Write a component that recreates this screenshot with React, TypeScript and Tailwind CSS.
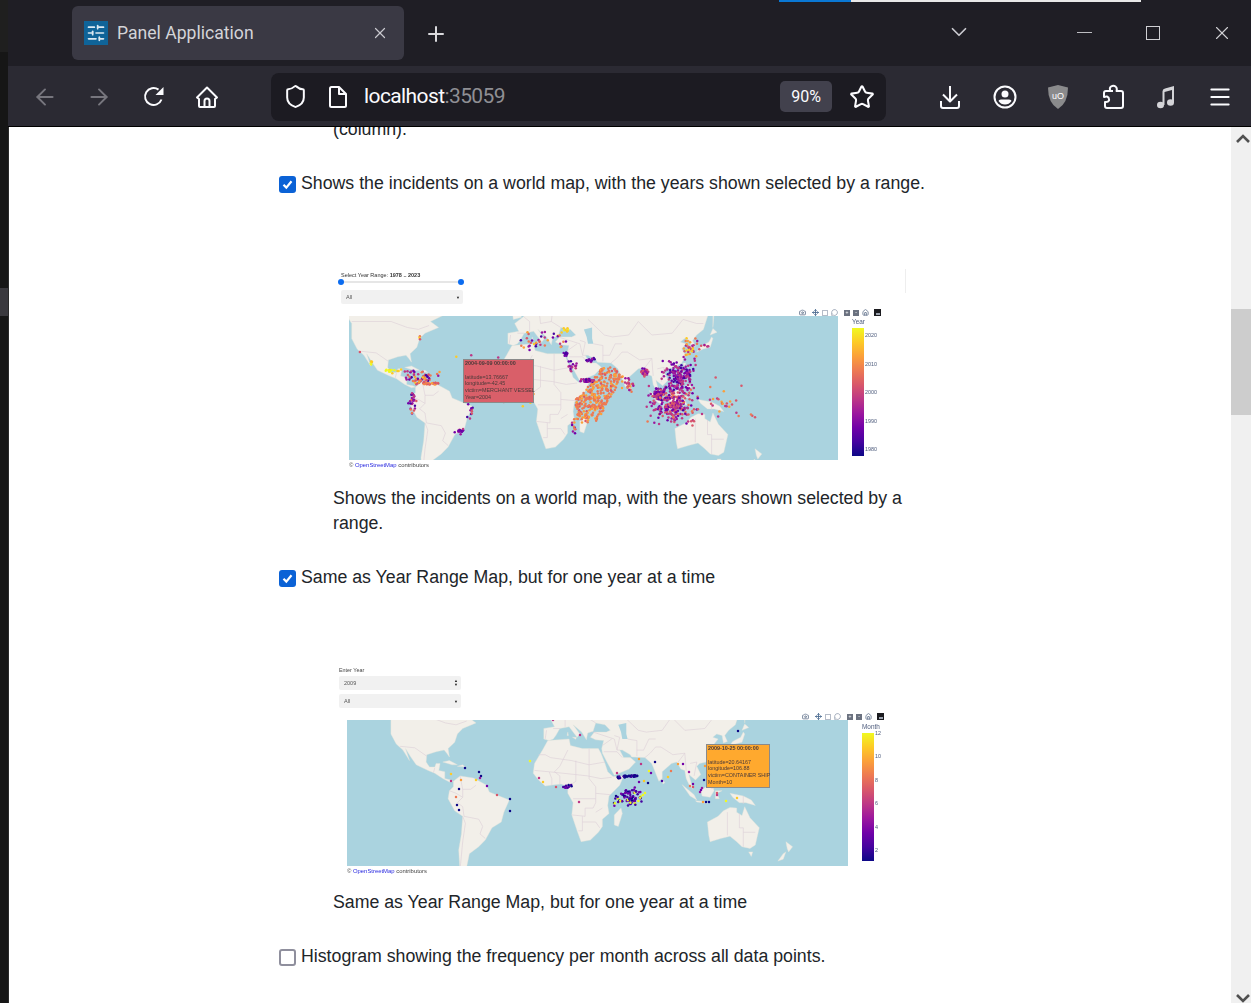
import React from "react";
import {
  ArrowLeft,
  ArrowRight,
  Camera,
  ChevronDown,
  Home,
  Menu,
  MessageCircle,
  Move,
  Plus,
  Shield,
  SlidersHorizontal,
  Star,
  X,
} from "lucide-react";

type Pt = [number, number];
type Proj = { k: number; lon0: number; y0: number };
type Dot = { x: number; y: number; t: number };

const LAND: Pt[][] = [
  [[-168,66],[-140,70],[-125,70],[-95,72],[-82,68],[-94,60],[-82,52],[-79,55],[-65,60],[-56,52],[-66,49],[-60,46],[-70,43],[-74,40],[-76,35],[-81,31],[-80,25.5],[-82,28],[-84,30],[-90,29],[-97,27],[-97.5,22],[-95,18.5],[-91,18.5],[-90,21],[-87,21],[-88,16],[-83.5,15],[-83.5,10],[-79,9],[-77,8],[-80,7.5],[-85,10],[-91,14],[-96,16],[-105,20],[-109,25.5],[-113,31],[-110,23],[-115,30],[-120,34],[-124,40],[-124,48],[-130,54],[-150,60],[-165,55]],
  [[-77,8],[-72,12],[-62,10.5],[-52,5],[-50,0],[-44,-2.5],[-35,-6],[-39,-15],[-41,-22],[-48,-26],[-53,-34],[-58,-38],[-65,-42],[-68,-52],[-72,-52],[-73,-40],[-71,-30],[-70,-18],[-76,-14],[-81,-5],[-80,1],[-77,4]],
  [[-6,36],[10,37],[11,33],[20,31],[32,31],[34,28],[37,21],[39,15],[43,11.5],[51,12],[48,5],[40,-3],[39,-10],[40,-16],[35,-20],[35,-25],[32,-29],[26,-34],[19,-35],[16,-28],[12,-17],[13,-8],[9,-1],[9,4],[4,6],[-4,5],[-8,4.5],[-13,9],[-17,14],[-16,21],[-10,30]],
  [[-9,37],[-9,43],[-1,44],[-4,48],[2,51],[8,54],[9,57],[12,54],[20,55],[24,59],[30,60],[22,60],[22,65],[17,61],[17,57],[12,56],[6,58],[12,66],[25,71],[40,67],[60,69],[80,73],[110,76],[140,73],[170,70],[180,68],[180,62],[163,60],[156,52],[156,58],[140,55],[135,45],[130,42],[127,39],[129,35.5],[126,34.5],[125,39],[121,40],[118,38],[122,37],[119,34],[122,30],[119,25],[113,22],[108,21],[106,19],[109,13],[105,9],[100,13],[103,2],[100,6],[98,10],[97,16],[94,17],[91,22],[87,21],[80,15],[80,10],[77.5,8],[73,19],[72,21],[67,25],[57,25.5],[56,27],[50,30],[48,30],[51,25],[56,25],[60,22],[55,17],[44,12.5],[39,21],[35,28],[34.5,31],[36,36],[30,36.5],[26,38],[29,41],[38,41],[41,42],[37,45],[30,46],[28,41.5],[24,40.5],[23,36.5],[19.5,41],[13,45],[18,40],[16,38],[10,44],[3,43],[0,39],[-2,37],[-5,36]],
  [[-5,50],[1,51],[-2,56],[-5,58],[-6,55]],
  [[-10,52],[-6,52],[-6,55],[-9,54]],
  [[-85,22],[-80,23],[-74,20],[-78,20]],
  [[-74,19],[-68,18.5],[-70,20]],
  [[49,-12],[50,-16],[47,-25],[44,-24],[44,-17]],
  [[80,9.5],[82,7],[80.5,6]],
  [[95,5.5],[104,-2],[106,-6],[101,-3]],
  [[105,-6.5],[114,-7.5],[114,-8.5],[106,-7.5]],
  [[109,1],[117,7],[119,1],[116,-4],[110,-3]],
  [[120,1],[125,1],[121,-1],[123,-5],[120,-5]],
  [[131,-1],[141,-3],[147,-6],[150,-10],[143,-8],[138,-8],[133,-4]],
  [[120,18],[122,18],[122,14],[120,14]],
  [[122,9],[126,9],[126,6],[123,7]],
  [[120,25],[122,25],[121,22]],
  [[130,32],[135,34],[140,35],[142,40],[141,41],[139,38],[133,35.5]],
  [[140,42],[145,43.5],[142,45.5]],
  [[142,46],[143,54],[142,54]],
  [[114,-22],[122,-18],[126,-14],[131,-11.5],[136,-12],[136,-15],[140,-17.5],[142,-11],[146,-19],[153,-26],[150,-37],[146,-39],[140,-38],[136,-35],[131,-31.5],[124,-33],[116,-35],[115,-31]],
  [[145,-41],[148,-41],[147,-43.5]],
  [[173,-35],[178,-38],[175,-41],[174,-39]],
  [[173,-41],[171,-45],[167,-46],[171,-42]],
  [[9,41],[9.5,39],[8.5,39]],
  [[12.5,38],[15.5,38],[15,36.8]],
];

const CASPIAN: Pt[] = [[47,45],[53,46],[53,40],[54,37],[50,37],[49,41]];

const BORDERS: Pt[][] = [
  [[-124,49],[-95,49],[-83,46],[-75,45],[-67,47]],
  [[-117,32.5],[-106,31.5],[-97,26]],
  [[-92,14.5],[-91,18]],
  [[-72,12],[-70,2],[-70,-4],[-74,-8],[-70,-11],[-69,-18],[-58,-20],[-55,-25],[-57,-30],[-53,-33]],
  [[-60,5],[-64,2],[-70,2]],
  [[-70,-18],[-68,-23],[-70,-35],[-72,-50]],
  [[-80,1],[-75,-1],[-70,-4]],
  [[-13,27],[-8,27],[-4,25],[12,23],[25,20],[37,22]],
  [[25,31],[25,10],[30,4],[30,-8],[28,-12],[22,-12],[22,-18],[12,-17]],
  [[-16,16],[-5,15],[15,13],[24,12],[34,10],[42,11]],
  [[9,4],[15,8],[15,23]],
  [[3,6],[3,12],[-1,15],[3,19],[9,30]],
  [[13,-5],[30,-5]],
  [[30,-1],[41,-2]],
  [[20,-18],[20,-28],[17,-28]],
  [[20,-22],[30,-22],[33,-26]],
  [[35,-12],[30,-15]],
  [[-5,15],[-3,10],[-3,5]],
  [[-8,37],[-7,42]],
  [[-2,43],[3,43]],
  [[3,51],[7,49],[7,44]],
  [[14,54],[15,48],[23,49],[24,54],[28,56],[30,60]],
  [[23,49],[30,46]],
  [[28,41],[44,37],[46,30],[48,30]],
  [[35,33],[42,37]],
  [[36,29],[46,29],[50,25]],
  [[44,39],[48,38],[46,30]],
  [[61,26],[61,36],[54,37]],
  [[61,30],[66,30],[70,37],[75,37]],
  [[67,25],[71,28],[75,32],[79,32],[88,27],[97,28],[92,22]],
  [[50,50],[62,42],[68,41],[80,42],[87,49],[97,42],[112,43],[120,50],[130,48],[135,48]],
  [[97,28],[98,16]],
  [[101,21],[106,22],[104,12]],
  [[141,-3],[141,-9]],
  [[129,-15],[129,-31]],
  [[138,-16],[138,-26],[141,-26],[141,-38]],
  [[141,-29],[150,-29]],
];

const PLASMA = ["#0d0887","#46039f","#7201a8","#9c179e","#bd3786","#d8576b","#ed7953","#fb9f3a","#fdca26","#f0f921"];
const plasma = (t: number) => PLASMA[Math.min(9, Math.max(0, Math.round(t * 9)))];

let seed = 1234;
const rnd = () => {
  seed = (seed + 0x6d2b79f5) | 0;
  let r = Math.imul(seed ^ (seed >>> 15), 1 | seed);
  r = (r + Math.imul(r ^ (r >>> 7), 61 | r)) ^ r;
  return ((r ^ (r >>> 14)) >>> 0) / 4294967296;
};
const between = (a: number, b: number) => a + (b - a) * rnd();
// softer edges than a plain box
const soft = (a: number, b: number) => a + (b - a) * ((rnd() + rnd()) / 2);

const project = (p: Proj, lon: number, lat: number): Pt => [
  (lon - p.lon0) * p.k,
  p.y0 - p.k * (180 / Math.PI) * Math.log(Math.tan(Math.PI / 4 + (lat * Math.PI) / 360)),
];

const toPath = (p: Proj, pts: Pt[], close: boolean) =>
  pts
    .map(([lon, lat], i) => {
      const [x, y] = project(p, lon, lat);
      return `${i ? "L" : "M"}${x.toFixed(1)} ${y.toFixed(1)}`;
    })
    .join("") + (close ? "Z" : "");

// lon min, lon max, lat min, lat max, count, colour low, colour high
const CLUSTERS: number[][] = [
  [43,56,11.5,14,45,0.1,0.5],[34,42,15,28,14,0.1,0.5],[48,56,25,29,14,0.1,0.4],[32,36,29,33,10,0.05,0.3],
  [97,106,-1,7,45,0.1,0.6],[92,132,-20,12,260,0.15,0.65],[104,130,4,28,150,0.1,0.5],[118,133,24,43,34,0.3,0.9],
  [130,141,33,38,6,0.3,0.7],[130,166,-14,4,20,0.4,0.8],[88,95,15,22,24,0.2,0.6],[72,86,3,16,24,0.3,0.8],
  [-88,-58,10,20,55,0.1,0.9],[-78,-58,9.5,12,32,0.5,0.8],[-83,-76,-14,6,26,0.1,0.7],[-40,-34,-16,-3,10,0.1,0.7],[-49,-40,-26,-21,8,0.1,0.7],
  [-46,-42,-24.5,-23,12,0.05,0.3],[-2,13,-4,6,12,0.6,0.95],[-6,37,32,45,36,0.1,0.9],[-101,-87,17,22,14,0.85,1],
  [-111,-108,23,27,5,0.8,1],[29,38,43,46,8,0.9,1],[37,42,-27,-13,10,0.1,0.8],[-19,-12,9,31,7,0.2,0.9],[-75,-72,38,42,3,0.5,0.9],
];

const buildRangeDots = (p: Proj) => {
  seed = 77;
  const dots: Dot[] = [];
  let left = 320;
  while (left > 0) {
    const lat = between(-18, 22);
    const lon = between(41, 78);
    const min = lat < 0 ? 41 : 43 + lat * 0.8;
    const max = 76 - Math.abs(lat - 15) * 0.6;
    if (lon < min || lon > max) continue;
    const [x, y] = project(p, lon, lat);
    dots.push({ x, y, t: between(0.58, 0.78) });
    left--;
  }
  CLUSTERS.forEach(([a, b, c, d, n, lo, hi]) => {
    for (let i = 0; i < n; i++) {
      const [x, y] = project(p, soft(a, b), soft(c, d));
      dots.push({ x, y, t: between(lo, hi) });
    }
  });
  const extra: number[][] = [
    [173,-14,0.55],[171,-13,0.6],[163,9,0.5],[150,5,0.75],[144,15,0.6],[140,8,0.65],[170,-12,0.7],[146,-1,0.5],
    [-47,29,0.85],[-31,-2,0.5],[-36,30,0.4],[-118,32,0.6],[-12,-3,0.6],[2,-6,0.85],
  ];
  extra.forEach(([lon, lat, t]) => {
    const [x, y] = project(p, lon, lat);
    dots.push({ x, y, t });
  });
  return dots;
};

// traced from the one-year map: x, y (map pixels), colour
const YEAR_SPOTS: number[][] = [
  [206,0,0.4],[233,15,0.4],[118,48,0],[132,52,0.05],[134,56,0.05],[133,58,0.3],[104,54,0.85],[104,61,0.4],
  [114,60,0.8],[129,60,0.85],[112,69,0],[109,77,0.7],[110,85,0],[112,90,0],[140,66,0.2],[150,75,0.5],
  [163,79,0],[163,91,0],[183,41,1],[192,58,0.4],[196,62,0.85],[209,67,0.5],[232,82,0.4],[270,53,0.4],[269,76,0],[267,83,0],
  [391,11,0],[292,39,0.8],[308,42,0.05],[294,44,0.4],[331,44,0.75],[336,44,0.2],[358,46,0.8],[324,51,0.7],[342,52,0.3],
  [321,57,0.85],[302,51,0.95],[304,53,0.2],[315,61,0.1],[301,63,0.05],[292,62,0.2],[297,61,0.85],[357,60,0.05],
  [343,66,0.7],[346,67,0.6],[346,64,0.2],[353,72,0.3],[355,68,0.3],[354,70,0.2],[370,75,0.45],[370,73,0.5],[390,78,0.9],[379,81,0.95],
  [356,82,0.8],[359,82,0],[362,82,0],[365,67,0.6],[298,73,0.95],[296,75,0.95],
];

const buildYearDots = () => {
  seed = 31;
  const dots: Dot[] = YEAR_SPOTS.map(([x, y, t]) => ({ x, y, t }));
  for (let i = 0; i < 36; i++) {
    const x = between(270, 291);
    dots.push({ x, y: 57.5 - (x - 270) * 0.1 + between(-1, 1), t: between(0, 0.1) });
  }
  for (let i = 0; i < 12; i++) dots.push({ x: between(216, 228), y: between(65, 68), t: between(0, 0.2) });
  for (let i = 0; i < 70; i++) {
    const t = rnd();
    dots.push({ x: soft(266, 300), y: soft(67, 90), t: t > 0.78 ? 0.95 : t * 0.35 });
  }
  return dots;
};

const WorldMap = ({ proj, width, height, dots }: { proj: Proj; width: number; height: number; dots: Dot[] }) => (
  <svg width={width} height={height} viewBox={`0 0 ${width} ${height}`} className="block">
    <rect width={width} height={height} fill="#aad3df" />
    {LAND.map((pts, i) => (
      <path key={i} d={toPath(proj, pts, true)} fill="#f2efe9" stroke="#e4e3d8" strokeWidth="0.4" />
    ))}
    <path d={toPath(proj, CASPIAN, true)} fill="#aad3df" />
    {BORDERS.map((pts, i) => (
      <path key={i} d={toPath(proj, pts, false)} fill="none" stroke="#dccfd6" strokeWidth="0.6" />
    ))}
    {dots.map((d, i) => (
      <circle key={i} cx={d.x} cy={d.y} r="1.25" fill={plasma(d.t)} />
    ))}
  </svg>
);

const PlotTools = () => (
  <div className="flex items-center text-[#6b7b93]">
    <Camera size={7} strokeWidth={3} className="mr-[6px]" />
    <Move size={7} strokeWidth={3} className="mr-[3px] text-[#4a6a90]" />
    <span className="mr-[3px] h-[6px] w-[6px] border border-dashed border-[#b5bcc8]" />
    <MessageCircle size={7} strokeWidth={2} className="mr-[6px]" />
    <span className="mr-[3px] flex h-[6px] w-[6px] items-center justify-center bg-[#6b7280] text-[5px] leading-none text-white">+</span>
    <span className="mr-[3px] flex h-[6px] w-[6px] items-center justify-center bg-[#6b7280] text-[5px] leading-none text-white">-</span>
    <Home size={7} strokeWidth={3} className="mr-[5px]" />
    <span className="flex h-[7px] w-[7px] items-end justify-center bg-[#1b1b1f] pb-[1px]">
      <span className="h-[2px] w-[4px] bg-[#9ca3af]" />
    </span>
  </div>
);

const Attribution = () => (
  <p className="text-[5.9px] leading-[7px] text-[#444]">
    © <span className="text-[#2a2ae0]">OpenStreetMap</span> contributors
  </p>
);

const ColorBar = ({ title, ticks, barClass }: { title: string; ticks: [string, number][]; barClass: string }) => (
  <div className="relative text-[5.4px] text-[#4d5b7c]">
    <div className="h-[12px] text-[6.4px] leading-[12px]">{title}</div>
    <div className={`relative w-[12px] bg-[linear-gradient(to_top,#0d0887,#46039f,#7201a8,#9c179e,#bd3786,#d8576b,#ed7953,#fb9f3a,#fdca26,#f0f921)] ${barClass}`}>
      {ticks.map(([label, top]) => (
        <span key={label} className="absolute left-[13px] leading-none" style={{ top }}>
          {label}
        </span>
      ))}
    </div>
  </div>
);

const Tooltip = ({ className, heading, lines }: { className: string; heading: string; lines: string[] }) => (
  <div className={`absolute border border-[#8a8a8a] px-[1px] text-[5.4px] leading-[6.8px] text-[#4a3a3a] ${className}`}>
    <div className="font-bold">{heading}</div>
    <div className="h-[6.8px]" />
    {lines.map((l) => (
      <div key={l} className="whitespace-nowrap">{l}</div>
    ))}
  </div>
);

const SelectBox = ({ label, arrows }: { label: string; arrows?: boolean }) => (
  <div className="flex h-[14px] w-[122px] items-center justify-between rounded-[2px] bg-[#f1f1f1] pl-[5px] pr-[3px] text-[5.5px] text-[#555]">
    <span>{label}</span>
    {arrows ? (
      <span className="flex flex-col text-[4px] leading-[4px] text-[#222]">
        <span>▲</span>
        <span>▼</span>
      </span>
    ) : (
      <span className="text-[4px] text-[#222]">▼</span>
    )}
  </div>
);

const RANGE_PROJ: Proj = { k: 1.358, lon0: -126, y0: 82 };
const YEAR_PROJ: Proj = { k: 1.33, lon0: -157, y0: 72 };
const rangeDots = buildRangeDots(RANGE_PROJ);
const yearDots = buildYearDots();

const RangePanel = () => (
  <div className="relative mt-[73px] h-[206px] w-[573px] font-['Liberation_Sans',sans-serif] blur-[0.5px]">
    <div className="absolute right-0 top-0 h-[24px] w-px bg-[#eeeeee]" />
    <div className="pl-[8px] pt-[2px]">
      <div className="text-[5.5px] leading-[8px] text-[#333]">
        Select Year Range: <b>1978 .. 2023</b>
      </div>
      <div className="relative flex h-[6px] w-[120px] items-center justify-between">
        <span className="absolute inset-x-0 h-[1.5px] bg-[#e6e6e6]" />
        <span className="relative -ml-[3px] h-[6px] w-[6px] rounded-full bg-[#0b6cf0]" />
        <span className="relative -mr-[3px] h-[6px] w-[6px] rounded-full bg-[#0b6cf0]" />
      </div>
      <div className="mt-[5px]">
        <SelectBox label="All" />
      </div>
    </div>
    <div className="relative ml-[16px] mt-[12px] flex">
      <div className="relative">
        <WorldMap proj={RANGE_PROJ} width={489} height={144} dots={rangeDots} />
        <Tooltip
          className="left-[114px] top-[43px] h-[44px] w-[71px] bg-[#d95f69]"
          heading="2004-09-09 00:00:00"
          lines={["latitude=13.76667", "longitude=-42.45", "victim=MERCHANT VESSEL", "Year=2004"]}
        />
      </div>
      <div className="ml-[14px]">
        <ColorBar
          title="Year"
          barClass="h-[128px]"
          ticks={[["2020", 5], ["2010", 34], ["2000", 62], ["1990", 91], ["1980", 119]]}
        />
      </div>
      <div className="absolute left-[450px] -top-[7px]">
        <PlotTools />
      </div>
    </div>
    <div className="ml-[16px] mt-[2px]">
      <Attribution />
    </div>
  </div>
);

const YearPanel = () => (
  <div className="relative mt-[74px] h-[213px] w-[573px] font-['Liberation_Sans',sans-serif] blur-[0.5px]">
    <div className="pl-[6px] pt-[2px]">
      <div className="text-[5.4px] leading-[8px] text-[#444]">Enter Year</div>
      <div className="mt-[2px]">
        <SelectBox label="2009" arrows />
      </div>
      <div className="mt-[4px]">
        <SelectBox label="All" />
      </div>
    </div>
    <div className="relative ml-[14px] mt-[12px] flex">
      <div className="relative">
        <WorldMap proj={YEAR_PROJ} width={501} height={146} dots={yearDots} />
        <Tooltip
          className="left-[359px] top-[24px] h-[44px] w-[64px] bg-[#ffa92e]"
          heading="2009-10-25 00:00:00"
          lines={["latitude=20.64167", "longitude=106.88", "victim=CONTAINER SHIP", "Month=10"]}
        />
      </div>
      <div className="ml-[14px] mt-[1px]">
        <ColorBar
          title="Month"
          barClass="h-[128px]"
          ticks={[["12", -2], ["10", 21], ["8", 45], ["6", 68], ["4", 92], ["2", 115]]}
        />
      </div>
      <div className="absolute left-[455px] -top-[7px]">
        <PlotTools />
      </div>
    </div>
    <div className="ml-[14px] mt-[2px]">
      <Attribution />
    </div>
  </div>
);

const CheckRow = ({ checked, label, className }: { checked?: boolean; label: string; className: string }) => (
  <div className={`flex h-[25px] items-center ${className}`}>
    {checked ? (
      <span className="mr-[5px] mt-[2px] flex h-[17px] w-[17px] items-center justify-center rounded-[3px] bg-[#0b62d6]">
        <svg width="13" height="13" viewBox="0 0 13 13" fill="none" stroke="#fff" strokeWidth="2.2">
          <path d="M2.5 6.8 L5.3 9.6 L10.5 3.2" />
        </svg>
      </span>
    ) : (
      <span className="mr-[5px] mt-[2px] h-[17px] w-[17px] rounded-[3px] border-2 border-[#8f8f9d] bg-white" />
    )}
    <span>{label}</span>
  </div>
);

const Reload = () => (
  <svg width="24" height="24" viewBox="0 0 24 24" fill="none" stroke="#fbfbfe" strokeWidth="2">
    <path d="M19.5 14.5 A8.5 8.5 0 1 1 16.5 4.6" />
    <path d="M21.5 2 V10 H13.5 Z" fill="#fbfbfe" stroke="none" />
  </svg>
);

const FoxHome = () => (
  <svg width="24" height="24" viewBox="0 0 24 24" fill="none" stroke="#fbfbfe" strokeWidth="2" strokeLinejoin="round">
    <path d="M12 2.5 L2 12.5 L4 14 L4 21 Q4 22 5 22 L19 22 Q20 22 20 21 L20 14 L22 12.5 Z" />
    <path d="M9.5 22 V16 Q9.5 13.5 12 13.5 Q14.5 13.5 14.5 16 V22" />
  </svg>
);

const PageIcon = () => (
  <svg width="20" height="24" viewBox="0 0 20 24" fill="none" stroke="#fbfbfe" strokeWidth="2" strokeLinejoin="round">
    <path d="M2 3.5 Q2 2 3.5 2 H11 L18 9 V20.5 Q18 22 16.5 22 H3.5 Q2 22 2 20.5 Z" />
    <path d="M11 2 V9 H18" />
  </svg>
);

const DownloadIcon = () => (
  <svg width="24" height="26" viewBox="0 0 24 26" fill="none" stroke="#fbfbfe" strokeWidth="2" strokeLinejoin="round">
    <path d="M12 2 V17 M5 10.5 L12 17.5 L19 10.5" />
    <path d="M3 17 V22 Q3 24 5 24 H19 Q21 24 21 22 V17" />
  </svg>
);

const AccountIcon = () => (
  <svg width="24" height="24" viewBox="0 0 24 24" fill="none" stroke="#fbfbfe" strokeWidth="2">
    <circle cx="12" cy="12" r="10.5" />
    <circle cx="12" cy="9" r="3.5" fill="#fbfbfe" stroke="none" />
    <path d="M5.5 16 Q5.5 14.5 8 14.5 H16 Q18.5 14.5 18.5 16 Q16 19.5 12 19.5 Q8 19.5 5.5 16 Z" fill="#fbfbfe" stroke="none" />
  </svg>
);

const UBlockIcon = () => (
  <svg width="24" height="26" viewBox="0 0 24 26">
    <path d="M12 1 L22 3.5 Q22 19 12 25 Q2 19 2 3.5 Z" fill="#8a8a8c" />
    <text x="12" y="14.5" fontSize="9" fontFamily="'Liberation Sans', sans-serif" textAnchor="middle" fill="#fff">
      uO
    </text>
  </svg>
);

const PuzzleIcon = () => (
  <svg width="24" height="26" viewBox="0 0 24 26" fill="none" stroke="#fbfbfe" strokeWidth="2" strokeLinejoin="round">
    <path d="M12 7 H9.5 Q8 4 10 2.5 Q12.5 1 14.5 2.5 Q16.5 4 15.5 7 H20 Q22 7 22 9 V22 Q22 24 20 24 H6 Q4 24 4 22 V18 Q7 18.5 8 16.5 Q8.5 13.5 6 12.5 Q5 12.2 3 13 V9 Q3 7 5 7 H9.5" />
  </svg>
);

const MusicIcon = () => (
  <svg width="20" height="24" viewBox="0 0 20 24" fill="#d4d4d8">
    <ellipse cx="4.5" cy="20" rx="3.5" ry="3.3" />
    <ellipse cx="14.5" cy="17.5" rx="3.5" ry="3.3" />
    <path d="M6.5 20 V6.5 Q6.5 4 9 3.5 L18 1 V17.5 H16 V5 L8.5 7 V20 Z" />
  </svg>
);

const App = () => (
  <div className="flex h-[1003px] w-[1251px] flex-col overflow-hidden bg-white font-['Liberation_Sans',sans-serif]">
    <div className="flex h-[127px] shrink-0">
      <div className="flex w-[8px] shrink-0 flex-col">
        <div className="h-[52px] bg-[#1f1f1f]" />
        <div className="flex-1 bg-[#161616]" />
      </div>
      <div className="flex min-w-0 flex-1 flex-col">
        {/* tab strip */}
        <div className="relative flex h-[66px] shrink-0 items-start bg-[#1f1e25] pl-[64px] pt-[6px]">
          <div className="absolute left-[771px] top-0 flex h-[2px] w-[362px]">
            <div className="w-[72px] bg-[#0a78d4]" />
            <div className="flex-1 bg-[#e8e8e8]" />
          </div>
          <div className="flex h-[54px] w-[332px] items-center rounded-[6px] bg-[#3a3944] pl-[12px] pr-[15px]">
            <div className="mr-[9px] flex h-[24px] w-[24px] items-center justify-center bg-[#0f6499]">
              <SlidersHorizontal size={20} color="#dbe9f2" strokeWidth={2} />
            </div>
            <span className="flex-1 font-['Roboto',sans-serif] text-[17.6px] text-[#d4d4d8]">Panel Application</span>
            <X size={18} color="#c9c9cf" strokeWidth={1.6} />
          </div>
          <Plus size={24} color="#d9d9dd" strokeWidth={2} className="ml-[20px] mt-[16px]" />
          <ChevronDown size={26} color="#c9c9cf" strokeWidth={1.6} className="ml-[498px] mt-[13px]" />
          <div className="ml-[105px] mt-[26px] h-px w-[15px] bg-[#bdbdc2]" />
          <div className="ml-[54px] mt-[20px] h-[14px] w-[14px] border border-[#d0d0d4]" />
          <X size={22} color="#d0d0d4" strokeWidth={1.2} className="ml-[51px] mt-[16px]" />
        </div>
        {/* toolbar */}
        <div className="flex h-[60px] shrink-0 items-center bg-[#2b2a33] pt-[1px]">
          <ArrowLeft size={26} color="#77767e" strokeWidth={1.8} className="ml-[24px]" />
          <ArrowRight size={26} color="#77767e" strokeWidth={1.8} className="ml-[28px]" />
          <div className="ml-[30px]">
            <Reload />
          </div>
          <div className="ml-[29px]">
            <FoxHome />
          </div>
          <div className="ml-[52px] flex h-[48px] w-[615px] items-center rounded-[8px] bg-[#1c1b22] pl-[12px] pr-[11px]">
            <Shield size={25} color="#fbfbfe" strokeWidth={1.9} />
            <div className="ml-[20px]">
              <PageIcon />
            </div>
            <span className="ml-[16px] flex-1 pt-[1px] font-['Roboto',sans-serif] text-[21px] tracking-[-0.6px] text-[#fbfbfe]">
              localhost<span className="text-[#8f8f94]">:35059</span>
            </span>
            <span className="flex h-[31px] w-[52px] items-center justify-center rounded-[5px] bg-[#42414d] font-['Roboto',sans-serif] text-[16px] text-[#fbfbfe]">
              90%
            </span>
            <Star size={26} color="#fbfbfe" strokeWidth={1.9} className="ml-[17px]" />
          </div>
          <div className="ml-[52px]">
            <DownloadIcon />
          </div>
          <div className="ml-[31px]">
            <AccountIcon />
          </div>
          <div className="ml-[29px]">
            <UBlockIcon />
          </div>
          <div className="ml-[31px]">
            <PuzzleIcon />
          </div>
          <div className="ml-[31px]">
            <MusicIcon />
          </div>
          <Menu size={26} color="#fbfbfe" strokeWidth={1.8} className="ml-[31px]" />
        </div>
        <div className="h-px shrink-0 bg-black" />
      </div>
    </div>

    <div className="flex min-h-0 flex-1">
      <div className="flex w-[9px] shrink-0 flex-col border-r border-[#2a2a2a] bg-[#161616]">
        <div className="h-[161px]" />
        <div className="h-[28px] bg-[#3a393e]" />
      </div>
      <main className="min-w-0 flex-1 overflow-hidden pl-[270px] text-[17.74px] leading-[25px] text-[#212529]">
        <p className="-mt-[10px] ml-[54px]">(column).</p>
        <CheckRow checked label="Shows the incidents on a world map, with the years shown selected by a range." className="mt-[29px]" />
        <div className="ml-[54px]">
          <RangePanel />
          <p className="mt-[11px] w-[590px]">Shows the incidents on a world map, with the years shown selected by a range.</p>
        </div>
        <CheckRow checked label="Same as Year Range Map, but for one year at a time" className="mt-[29px]" />
        <div className="ml-[54px]">
          <YearPanel />
          <p className="mt-[13px] w-[590px]">Same as Year Range Map, but for one year at a time</p>
        </div>
        <CheckRow label="Histogram showing the frequency per month across all data points." className="mt-[29px]" />
      </main>
      <div className="flex w-[20px] shrink-0 flex-col items-center bg-[#f0f0f0]">
        <svg width="14" height="10" viewBox="0 0 14 10" fill="none" stroke="#505050" strokeWidth="2.6" className="ml-[4px] mt-[7px]">
          <path d="M1 8 L7 2 L13 8" />
        </svg>
        <div className="mt-[165px] h-[106px] w-full bg-[#cdcdcd]" />
        <svg width="14" height="10" viewBox="0 0 14 10" fill="none" stroke="#505050" strokeWidth="2.6" className="ml-[4px] mt-auto">
          <path d="M1 2 L7 8 L13 2" />
        </svg>
      </div>
    </div>
  </div>
);

export default App;
